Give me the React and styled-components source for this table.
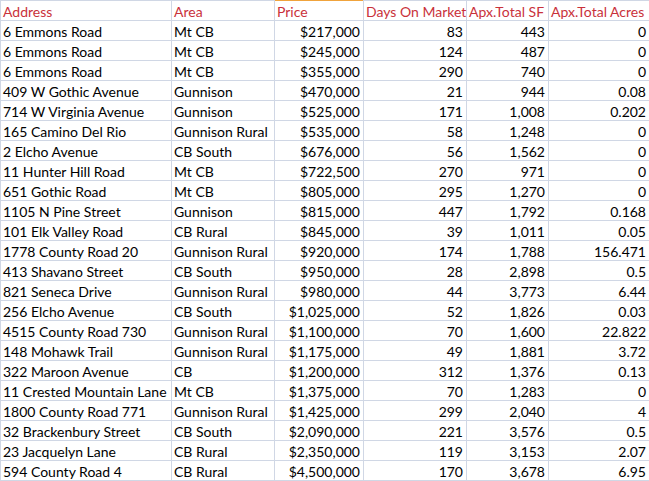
import styled, { createGlobalStyle } from "styled-components";

const GlobalStyle = createGlobalStyle`
  html, body {
    margin: 0;
    padding: 0;
    background: #ffffff;
  }
`;

const columns = [
  { title: "Address", width: 170, align: "left" },
  { title: "Area", width: 102, align: "left" },
  { title: "Price", width: 88, align: "right", selected: true },
  { title: "Days On Market", width: 102, align: "right" },
  { title: "Apx.Total SF", width: 81, align: "right" },
  { title: "Apx.Total Acres", width: 100, align: "right" },
];

const rows = [
  ["6 Emmons Road", "Mt CB", "$217,000", "83", "443", "0"],
  ["6 Emmons Road", "Mt CB", "$245,000", "124", "487", "0"],
  ["6 Emmons Road", "Mt CB", "$355,000", "290", "740", "0"],
  ["409 W Gothic Avenue", "Gunnison", "$470,000", "21", "944", "0.08"],
  ["714 W Virginia Avenue", "Gunnison", "$525,000", "171", "1,008", "0.202"],
  ["165 Camino Del Rio", "Gunnison Rural", "$535,000", "58", "1,248", "0"],
  ["2 Elcho Avenue", "CB South", "$676,000", "56", "1,562", "0"],
  ["11 Hunter Hill Road", "Mt CB", "$722,500", "270", "971", "0"],
  ["651 Gothic Road", "Mt CB", "$805,000", "295", "1,270", "0"],
  ["1105 N Pine Street", "Gunnison", "$815,000", "447", "1,792", "0.168"],
  ["101 Elk Valley Road", "CB Rural", "$845,000", "39", "1,011", "0.05"],
  ["1778 County Road 20", "Gunnison Rural", "$920,000", "174", "1,788", "156.471"],
  ["413 Shavano Street", "CB South", "$950,000", "28", "2,898", "0.5"],
  ["821 Seneca Drive", "Gunnison Rural", "$980,000", "44", "3,773", "6.44"],
  ["256 Elcho Avenue", "CB South", "$1,025,000", "52", "1,826", "0.03"],
  ["4515 County Road 730", "Gunnison Rural", "$1,100,000", "70", "1,600", "22.822"],
  ["148 Mohawk Trail", "Gunnison Rural", "$1,175,000", "49", "1,881", "3.72"],
  ["322 Maroon Avenue", "CB", "$1,200,000", "312", "1,376", "0.13"],
  ["11 Crested Mountain Lane", "Mt CB", "$1,375,000", "70", "1,283", "0"],
  ["1800 County Road 771", "Gunnison Rural", "$1,425,000", "299", "2,040", "4"],
  ["32 Brackenbury Street", "CB South", "$2,090,000", "221", "3,576", "0.5"],
  ["23 Jacquelyn Lane", "CB Rural", "$2,350,000", "119", "3,153", "2.07"],
  ["594 County Road 4", "CB Rural", "$4,500,000", "170", "3,678", "6.95"],
];

const Sheet = styled.div`
  display: grid;
  grid-template-columns: ${columns.map((c) => `${c.width}px`).join(" ")};
  grid-auto-rows: 19px;
  gap: 1px;
  padding: 1px 0 1px 1px;
  width: 649px;
  box-sizing: border-box;
  background: #d0d7e5;
  font-family: Lato, "Open Sans", sans-serif;
  font-size: 14px;
`;

const Cell = styled.div`
  background: #ffffff;
  color: #000000;
  display: flex;
  align-items: flex-end;
  justify-content: ${(p) => (p.$align === "right" ? "flex-end" : "flex-start")};
  padding: 0 3px 0 2px;
  line-height: 17px;
  white-space: nowrap;
  overflow: hidden;
`;

const HeadCell = styled(Cell)`
  color: #c9313a;
  justify-content: flex-start;
  overflow: visible;
  box-shadow: ${(p) => (p.$selected ? "0 -1px 0 #f0a33c" : "none")};
`;

export default function App() {
  return (
    <>
      <GlobalStyle />
      <Sheet>
        {columns.map((c) => (
          <HeadCell key={c.title} $selected={c.selected}>
            {c.title}
          </HeadCell>
        ))}
        {rows.map((r, i) =>
          r.map((v, j) => (
            <Cell key={`${i}-${j}`} $align={columns[j].align}>
              {v}
            </Cell>
          ))
        )}
      </Sheet>
    </>
  );
}
